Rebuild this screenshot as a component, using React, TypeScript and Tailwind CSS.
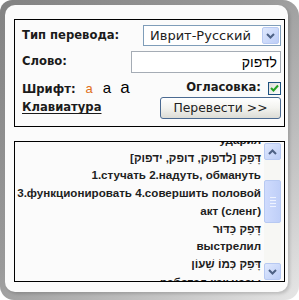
import React from 'react';

const lines = [
  { t: 'ударил', he: false },
  { t: 'דָּפַק [לדפוק, דופק, ידפוק]', he: true },
  { t: '1.стучать 2.надуть, обмануть', he: false },
  { t: '3.функционировать 4.совершить половой', he: false },
  { t: 'акт (сленг)', he: false },
  { t: 'דָּפַק כַּדּוּר', he: true },
  { t: 'выстрелил', he: false },
  { t: 'דָּפַק כְּמוֹ שָׁעוֹן', he: true },
  { t: 'работал как часы', he: false },
];

const Chevron: React.FC<{ up?: boolean }> = ({ up }) => (
  <svg width="9" height="6" viewBox="0 0 9 6" className={up ? 'rotate-180' : ''}>
    <path d="M1 1 L4.5 4.5 L8 1" fill="none" stroke="#4d6185" strokeWidth="2" />
  </svg>
);

const XpArrow: React.FC<{ up?: boolean }> = ({ up }) => (
  <div className="flex h-[17px] w-[17px] items-center justify-center rounded-[2px] border border-[#b7c9f2] bg-gradient-to-br from-[#dfe8fd] to-[#bccdf7]">
    <Chevron up={up} />
  </div>
);

export default function App() {
  return (
    <div className="h-[300px] w-[299px] bg-white font-['DejaVu_Sans',sans-serif]">
      <div className="h-full rounded-tl-[12px] rounded-tr-[16px] rounded-b-[14px] bg-[linear-gradient(135deg,#838383_0%,#9a9a9a_45%,#c9c9c9_80%,#e6e6e6_100%)] pb-[8px] pl-[5px] pr-[11px] pt-[5px]">
        <div className="h-full rounded-[10px] bg-[#fbfbfb] pl-[9px] pr-[3px] pt-[14px] shadow-[2px_2px_3px_rgba(0,0,0,0.15)]">
          {/* form */}
          <div className="flex h-[108px] flex-col border border-black pl-[7px] pr-[3px] text-[11.6px] font-bold text-[#1b1b1b]">
            <div className="mt-[5px] flex items-center justify-between">
              <span>Тип перевода:</span>
              <div className="flex h-[21px] w-[138px] items-center justify-between border border-[#7f9db9] bg-white pl-[6px] pr-[1px] text-[13px] font-normal text-[#222]">
                <span>Иврит-Русский</span>
                <XpArrow />
              </div>
            </div>
            <div className="mt-[5px] flex items-center justify-between">
              <span>Слово:</span>
              <div className="flex h-[22px] w-[150px] items-center justify-end border border-[#a5acb5] bg-white px-[3px] font-['Liberation_Sans',sans-serif] text-[14px] font-normal text-black">
                <span dir="rtl">לדפוק</span>
              </div>
            </div>
            <div className="mt-[7px] flex h-[16px] items-center justify-between">
              <div className="flex items-baseline">
                <span>Шрифт:</span>
                <span className="ml-[10px] font-['Liberation_Sans',sans-serif] text-[13px] font-normal text-[#e0701a]">a</span>
                <span className="ml-[10px] font-['Liberation_Sans',sans-serif] text-[15px] font-normal text-black">a</span>
                <span className="ml-[9px] font-['Liberation_Sans',sans-serif] text-[17px] font-normal text-black">a</span>
              </div>
              <div className="flex items-center">
                <span>Огласовка:</span>
                <div className="ml-[7px] flex h-[13px] w-[13px] items-center justify-center border border-[#1c5180] bg-gradient-to-br from-[#dcdcd7] to-white">
                  <svg width="9" height="8" viewBox="0 0 9 8">
                    <path d="M1 4 L3.5 6.5 L8 1.5" fill="none" stroke="#21a121" strokeWidth="2" />
                  </svg>
                </div>
              </div>
            </div>
            <div className="mt-[1px] flex items-center justify-between">
              <span className="underline underline-offset-2">Клавиатура</span>
              <button className="h-[22px] w-[121px] rounded-[3px] border border-[#4b6a91] bg-gradient-to-b from-white via-[#f3f3ef] to-[#dcdcd6] text-[12.4px] font-normal text-[#222]">
                Перевести &gt;&gt;
              </button>
            </div>
          </div>

          {/* result */}
          <div className="mt-[14px] flex h-[141px] border border-black">
            <div className="flex-1 overflow-hidden pr-[3px]">
              <div className="-mt-[11px] text-right font-['Liberation_Sans',sans-serif] text-[11.6px] font-bold leading-[17.7px] text-[#1e1e1e]">
                {lines.map((l, i) => (
                  <div key={i} dir={l.he ? 'rtl' : 'ltr'} className="whitespace-nowrap">
                    {l.t}
                  </div>
                ))}
              </div>
            </div>
            <div className="my-[1px] mr-[3px] flex w-[17px] flex-col bg-[#f7f7f4]">
              <XpArrow up />
              <div className="mt-[20px] flex h-[43px] flex-col items-center justify-center gap-[2px] rounded-[2px] border border-[#b7c9f2] bg-gradient-to-r from-[#cfdbfd] to-[#bfcff8]">
                <div className="h-[1px] w-[6px] bg-[#eef3ff]" />
                <div className="h-[1px] w-[6px] bg-[#eef3ff]" />
                <div className="h-[1px] w-[6px] bg-[#eef3ff]" />
                <div className="h-[1px] w-[6px] bg-[#eef3ff]" />
              </div>
              <div className="flex-1" />
              <XpArrow />
            </div>
          </div>
        </div>
      </div>
    </div>
  );
}
